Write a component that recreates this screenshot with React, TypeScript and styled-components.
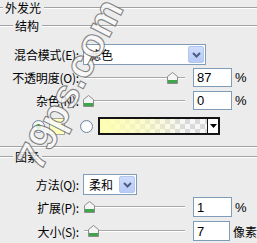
import React from 'react';
import styled, { createGlobalStyle } from 'styled-components';

const Global = createGlobalStyle`
  html, body { margin: 0; padding: 0; background: #ECECEC; }
  body {
    font-family: "Noto Sans CJK SC", "Liberation Sans", sans-serif;
    font-size: 12px;
    color: #000;
  }
`;

const Panel = styled.div`
  position: relative;
  width: 257px;
  height: 243px;
  overflow: hidden;
  background: #ECECEC;
  display: flex;
  flex-direction: column;
`;

const Rule = styled.div<{ $w?: number }>`
  flex: ${(p) => (p.$w ? `0 0 ${p.$w}px` : '1 1 auto')};
  height: 0;
  border-top: 1px solid #A2A2A2;
  border-bottom: 1px solid #FFFFFF;
`;

const Legend = styled.div<{ $mt: number }>`
  display: flex;
  align-items: center;
  height: 16px;
  margin-top: ${(p) => p.$mt}px;
`;

const LegendText = styled.span`
  padding: 0 3px 0 2px;
  line-height: 16px;
  white-space: nowrap;
`;

const Divider = styled.div<{ $mt: number }>`
  margin-top: ${(p) => p.$mt}px;
  border-top: 1px solid #A2A2A2;
  border-bottom: 1px solid #FFFFFF;
`;

const Row = styled.div<{ $mt: number; $h: number }>`
  display: flex;
  align-items: center;
  height: ${(p) => p.$h}px;
  margin-top: ${(p) => p.$mt}px;
`;

const Label = styled.span`
  flex: 0 0 79px;
  text-align: right;
  white-space: nowrap;
  margin-right: 4px;
  letter-spacing: -0.2px;
`;

const Select = styled.div<{ $w: number }>`
  box-sizing: border-box;
  width: ${(p) => p.$w}px;
  height: 21px;
  border: 1px solid #7F9DB9;
  background: #FFFFFF;
  display: flex;
  align-items: center;
  padding: 1px;
`;

const SelectText = styled.span`
  flex: 1;
  padding-left: 4px;
  white-space: nowrap;
`;

const SelectButton = styled.span`
  box-sizing: border-box;
  width: 16px;
  height: 17px;
  background: linear-gradient(#CFDCFB, #B7CAF6);
  border: 1px solid #B2C6F2;
  border-radius: 2px;
  display: flex;
  align-items: center;
  justify-content: center;
`;

const Slider = styled.div`
  position: relative;
  flex: 0 0 102px;
  height: 100%;
  margin-right: 8px;
`;

const TrackLine = styled.div`
  position: absolute;
  left: 1px;
  right: 0;
  top: 50%;
  margin-top: -1px;
  border-top: 1px solid #A8A8A8;
  border-bottom: 1px solid #FFFFFF;
`;

const Thumb = styled.svg`
  position: absolute;
  top: 50%;
  margin-top: -6px;
`;

const NumBox = styled.div<{ $h: number }>`
  box-sizing: border-box;
  width: 39px;
  height: ${(p) => p.$h}px;
  border: 1px solid #7F9DB9;
  background: #FFFFFF;
  padding-left: 3px;
  display: flex;
  align-items: center;
  font-family: "Liberation Sans", Arial, sans-serif;
  font-size: 13px;
`;

const Unit = styled.span`
  margin-left: 3px;
  white-space: nowrap;
`;

const UnitPct = styled(Unit)`
  font-family: "Liberation Sans", Arial, sans-serif;
  font-size: 13px;
`;

const ColorRow = styled.div`
  display: flex;
  align-items: center;
  height: 18px;
  margin-top: 7px;
  padding-left: 32px;
`;

const Radio = styled.span<{ $checked?: boolean; $mr: number }>`
  box-sizing: border-box;
  width: 13px;
  height: 13px;
  border-radius: 50%;
  border: 1px solid #6F86A6;
  background: radial-gradient(circle at 60% 60%, #FFFFFF 40%, #E2E2DC 100%);
  margin-right: ${(p) => p.$mr}px;
  display: flex;
  align-items: center;
  justify-content: center;
  &::after {
    content: '';
    display: ${(p) => (p.$checked ? 'block' : 'none')};
    width: 5px;
    height: 5px;
    border-radius: 50%;
    background: #2FA02F;
  }
`;

const Swatch = styled.span`
  box-sizing: border-box;
  width: 16px;
  height: 17px;
  background: #FFFFBE;
  border: 1px solid #A8A8A0;
  margin-right: 15px;
`;

const GradientBox = styled.div`
  box-sizing: border-box;
  width: 122px;
  height: 18px;
  border: 2px solid #141414;
  display: flex;
`;

const GradientFill = styled.div`
  flex: 1;
  background-image: linear-gradient(to right, rgba(255, 255, 178, 1) 0%, rgba(255, 255, 178, 0.6) 40%, rgba(255, 255, 178, 0) 80%),
    conic-gradient(#DADADA 25%, #F7F7F7 0 50%, #DADADA 0 75%, #F7F7F7 0);
  background-size: 100% 100%, 10px 10px;
`;

const GradientArrow = styled.div`
  flex: 0 0 10px;
  border-left: 1px solid #141414;
  background: #FFFFFF;
  display: flex;
  align-items: center;
  justify-content: center;
`;

const Watermark = styled.div`
  position: absolute;
  left: 70px;
  top: 84px;
  transform: translate(-50%, -50%) rotate(-63deg);
  font-family: "Liberation Sans", Arial, sans-serif;
  font-weight: bold;
  font-size: 40px;
  line-height: 1;
  white-space: nowrap;
  color: rgba(250, 250, 250, 0.85);
  -webkit-text-stroke: 1.1px rgba(80, 80, 80, 0.7);
  pointer-events: none;
`;

const Chevron = () => (
  <svg width="9" height="6" viewBox="0 0 9 6">
    <path d="M1 1 L4.5 4.5 L8 1" fill="none" stroke="#4A5E86" strokeWidth="2" />
  </svg>
);

const ThumbIcon = ({ left }: { left: number }) => (
  <Thumb width="11" height="12" viewBox="0 0 11 12" style={{ left }}>
    <path d="M5.5 0.5 L10.5 4.5 L10.5 11.5 L0.5 11.5 L0.5 4.5 Z" fill="#F4F4F4" stroke="#8C8C8C" />
    <rect x="1" y="8" width="9" height="3" fill="#3FA54A" />
  </Thumb>
);

type SliderProps = { label: string; value: string; pct: number; unit: string; mt: number; h: number; pctUnit?: boolean };

const SliderRow = ({ label, value, pct, unit, mt, h, pctUnit }: SliderProps) => (
  <Row $mt={mt} $h={h}>
    <Label>{label}</Label>
    <Slider>
      <TrackLine />
      <ThumbIcon left={Math.round(pct * 0.97)} />
    </Slider>
    <NumBox $h={h}>{value}</NumBox>
    {pctUnit ? <UnitPct>{unit}</UnitPct> : <Unit>{unit}</Unit>}
  </Row>
);

export default function App() {
  return (
    <>
      <Global />
      <Panel>
        <Legend $mt={0}>
          <Rule $w={3} />
          <LegendText>外发光</LegendText>
          <Rule />
        </Legend>
        <Legend $mt={2}>
          <Rule $w={13} />
          <LegendText>结构</LegendText>
          <Rule />
        </Legend>
        <Row $mt={10} $h={21}>
          <Label>混合模式(E):</Label>
          <Select $w={123}>
            <SelectText>滤色</SelectText>
            <SelectButton>
              <Chevron />
            </SelectButton>
          </Select>
        </Row>
        <SliderRow label="不透明度(O):" value="87" pct={87} unit="%" mt={3} h={19} pctUnit />
        <SliderRow label="杂色(N):" value="0" pct={0} unit="%" mt={4} h={19} pctUnit />
        <ColorRow>
          <Radio $checked $mr={4} />
          <Swatch />
          <Radio $mr={5} />
          <GradientBox>
            <GradientFill />
            <GradientArrow>
              <svg width="7" height="4" viewBox="0 0 7 4">
                <path d="M0 0 L7 0 L3.5 4 Z" fill="#000" />
              </svg>
            </GradientArrow>
          </GradientBox>
        </ColorRow>
        <Divider $mt={11} />
        <Legend $mt={1}>
          <Rule $w={13} />
          <LegendText>图素</LegendText>
          <Rule />
        </Legend>
        <Row $mt={9} $h={21}>
          <Label>方法(Q):</Label>
          <Select $w={54}>
            <SelectText>柔和</SelectText>
            <SelectButton>
              <Chevron />
            </SelectButton>
          </Select>
        </Row>
        <SliderRow label="扩展(P):" value="1" pct={1} unit="%" mt={2} h={20} pctUnit />
        <SliderRow label="大小(S):" value="7" pct={5} unit="像素" mt={4} h={20} />
        <Watermark>79ps.com</Watermark>
      </Panel>
    </>
  );
}
